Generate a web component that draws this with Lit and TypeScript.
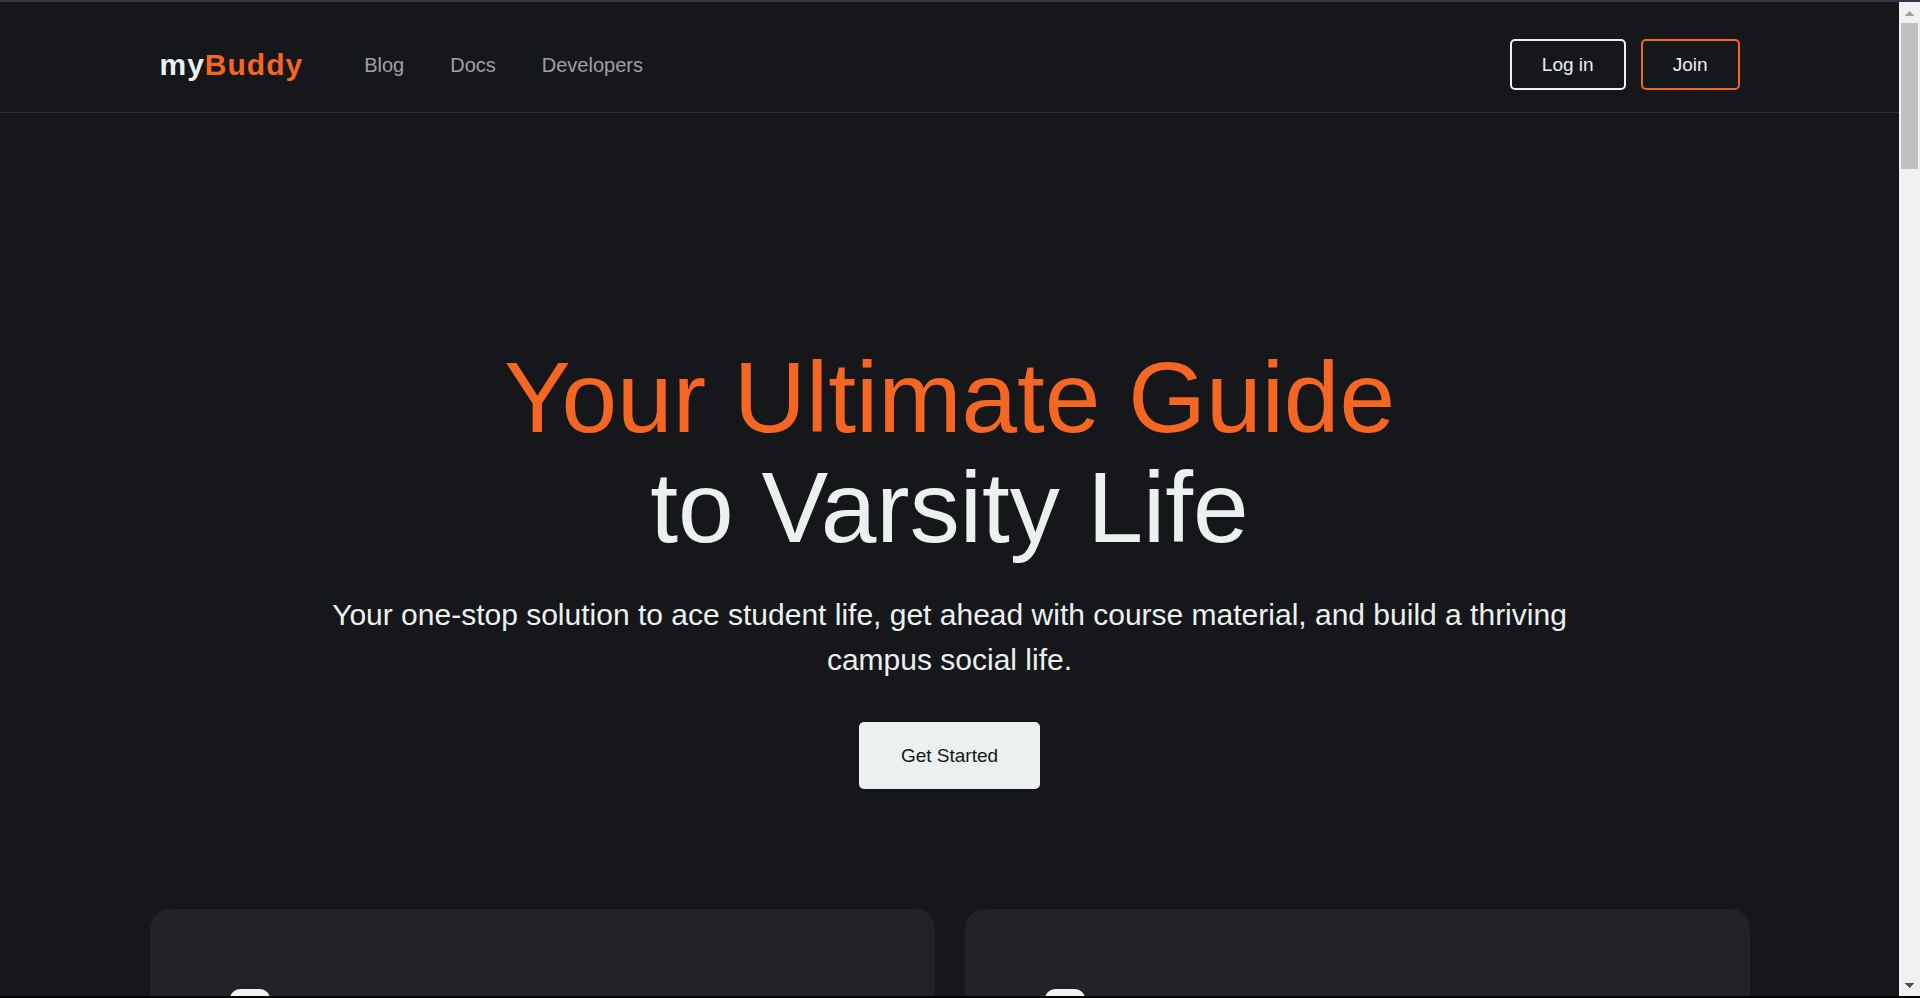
import { LitElement, html, css } from "lit";
import { customElement } from "lit/decorators.js";

@customElement("app-root")
export class AppRoot extends LitElement {
  static styles = css`
    :host {
      --bg: #16171b;
      --card: #222327;
      --light: #ecf0ef;
      --accent: #f56623;
      --muted: #9fa0a2;
      box-sizing: border-box;
      display: flex;
      height: 100vh;
      overflow: hidden;
      border-top: 2px solid #323648;
      border-bottom: 2px solid #000;
      background: var(--bg);
      color: var(--light);
      font-family: "Liberation Sans", Arial, sans-serif;
    }
    * {
      box-sizing: border-box;
    }
    .page {
      flex: 1;
      min-width: 0;
      overflow: hidden;
    }
    .wrap {
      max-width: 1600px;
      margin: 0 auto;
    }
    .header {
      border-bottom: 1px solid #2c2d30;
    }
    .bar {
      display: flex;
      align-items: center;
      padding: 37px 10px 22px;
    }
    a {
      color: inherit;
      text-decoration: none;
    }
    .logo {
      font-size: 30px;
      line-height: 34px;
      font-weight: 700;
      letter-spacing: 1px;
    }
    .accent {
      color: var(--accent);
    }
    .nav {
      display: flex;
      gap: 46px;
      margin-left: 61px;
      font-size: 20px;
      line-height: 24px;
      color: var(--muted);
    }
    .actions {
      display: flex;
      gap: 15px;
      margin-left: auto;
    }
    button {
      font-family: inherit;
      font-size: 19px;
      line-height: 21px;
      color: var(--light);
      border-radius: 5px;
      cursor: pointer;
    }
    .outline {
      padding: 13px 30px;
      border: 2px solid var(--light);
      background: transparent;
    }
    .outline.join {
      border-color: var(--accent);
    }
    .hero {
      display: flex;
      flex-direction: column;
      align-items: center;
      padding: 229px 120px 120px;
      text-align: center;
    }
    h1 {
      margin: 0;
      font-size: 100px;
      line-height: 110px;
      font-weight: 400;
    }
    .line {
      display: block;
    }
    .lead {
      max-width: 1280px;
      margin: 30px 0 40px;
      font-size: 30px;
      line-height: 45px;
    }
    .cta {
      padding: 23px 42px;
      border: 0;
      background: var(--light);
      color: var(--bg);
    }
    .cards {
      display: grid;
      grid-template-columns: 1fr 1fr;
      gap: 30px;
    }
    .card {
      padding: 80px;
      border-radius: 20px;
      background: var(--card);
    }
    .icon {
      display: block;
      width: 40px;
      height: 40px;
    }
    .scrollbar {
      display: flex;
      flex-direction: column;
      align-items: center;
      width: 21px;
      background: #f1f1f1;
    }
    .thumb {
      width: 17px;
      height: 146px;
      background: #c1c1c1;
    }
    .arrow {
      width: 21px;
      height: 21px;
    }
    .down {
      margin-top: auto;
    }
  `;

  render() {
    const icon = html`<svg class="icon" viewBox="0 0 40 40" aria-hidden="true">
      <rect width="40" height="40" rx="10" fill="#f1f2f3" />
    </svg>`;
    return html`
      <div class="page">
        <header class="header">
          <div class="wrap bar">
            <a class="logo" href="#">my<span class="accent">Buddy</span></a>
            <nav class="nav">
              <a href="#">Blog</a>
              <a href="#">Docs</a>
              <a href="#">Developers</a>
            </nav>
            <div class="actions">
              <button class="outline" type="button">Log in</button>
              <button class="outline join" type="button">Join</button>
            </div>
          </div>
        </header>
        <main>
          <section class="hero">
            <h1>
              <span class="line accent">Your Ultimate Guide</span>
              <span class="line">to Varsity Life</span>
            </h1>
            <p class="lead">
              Your one-stop solution to ace student life, get ahead with course
              material, and build a thriving campus social life.
            </p>
            <button class="cta" type="button">Get Started</button>
          </section>
          <section class="wrap cards">
            <article class="card">${icon}</article>
            <article class="card">${icon}</article>
          </section>
        </main>
      </div>
      <div class="scrollbar" aria-hidden="true">
        <svg class="arrow" viewBox="0 0 21 21" shape-rendering="crispEdges">
          <path d="M6 14 L10.5 9 L15 14 Z" fill="#a3a3a3" />
        </svg>
        <div class="thumb"></div>
        <svg class="arrow down" viewBox="0 0 21 21" shape-rendering="crispEdges">
          <path d="M6 8 L15 8 L10.5 13 Z" fill="#505050" />
        </svg>
      </div>
    `;
  }
}
